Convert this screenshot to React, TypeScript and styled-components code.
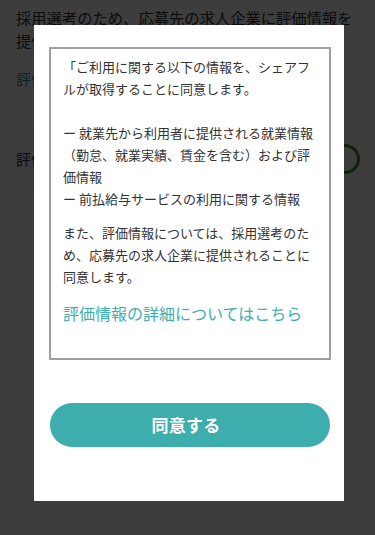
import React from "react";
import styled, { createGlobalStyle } from "styled-components";

const GlobalStyle = createGlobalStyle`
  html, body {
    margin: 0;
    padding: 0;
    background: #ffffff;
    font-family: "Noto Sans CJK JP", "Noto Sans", sans-serif;
    color: #333333;
  }
  * { box-sizing: border-box; }
`;

const Page = styled.div`
  width: 375px;
  height: 535px;
  overflow: hidden;
  background: #ffffff;
`;

const Section = styled.div`
  padding: 6px 16px 0 16px;
`;

const BgText = styled.p`
  margin: 0;
  font-size: 15.3px;
  line-height: 23px;
  color: #333333;
`;

const BgLink = styled.p`
  margin: 15px 0 38px;
  font-size: 15px;
  line-height: 23px;
  color: #2f8f8a;
`;

const SettingRow = styled.div`
  display: flex;
  align-items: center;
  justify-content: space-between;
  height: 60px;
  padding: 0 16px;
  border-top: 1px solid #f0f0f0;
  background: #fbfbfb;
`;

const SettingLabel = styled.span`
  font-size: 15px;
  color: #333333;
`;

const Toggle = styled.span`
  width: 30px;
  height: 30px;
  margin-right: -1px;
  border-radius: 50%;
  border: 3px solid #3a8a3a;
`;

const Overlay = styled.div`
  position: fixed;
  inset: 0;
  background: rgba(0, 0, 0, 0.76);
  padding: 25px 0 0 34px;
`;

const Modal = styled.div`
  width: 310px;
  height: 476px;
  background: #ffffff;
  padding: 22px 13px 0 15px;
  display: flex;
  flex-direction: column;
`;

const TermsBox = styled.div`
  height: 313px;
  border: 2px solid #a0a0a0;
  padding: 7px 12px 0 12px;
  overflow: hidden;
`;

const TermsText = styled.p<{ $gap?: number }>`
  margin: 0 0 ${(p) => p.$gap ?? 0}px;
  font-size: 13px;
  line-height: 22px;
  color: #333333;
  white-space: pre-wrap;
`;

const DetailLink = styled.a`
  display: block;
  margin-top: 13px;
  font-size: 16px;
  line-height: 24px;
  color: #3eaeae;
  text-decoration: none;
`;

const AgreeButton = styled.button`
  margin: 43px 0 0 1px;
  width: 280px;
  height: 44px;
  border: none;
  border-radius: 22px;
  background: #3eadad;
  color: #ffffff;
  font-family: "Noto Sans CJK JP", "Noto Sans", sans-serif;
  font-size: 17px;
  font-weight: 700;
  letter-spacing: 0.2px;
  cursor: pointer;
  padding: 0 8px 2px 0;
`;

export default function App() {
  return (
    <>
      <GlobalStyle />
      <Page>
        <Section>
          <BgText>採用選考のため、応募先の求人企業に評価情報を提供することに同意します。</BgText>
          <BgLink>評価情報の詳細についてはこちら</BgLink>
        </Section>
        <SettingRow>
          <SettingLabel>評価情報の提供</SettingLabel>
          <Toggle />
        </SettingRow>
      </Page>
      <Overlay>
        <Modal>
          <TermsBox>
            <TermsText $gap={12}>
              {"「ご利用に関する以下の情報を、シェアフルが取得することに同意します。\n\nー 就業先から利用者に提供される就業情報（勤怠、就業実績、賃金を含む）および評価情報\nー 前払給与サービスの利用に関する情報"}
            </TermsText>
            <TermsText>
              また、評価情報については、採用選考のため、応募先の求人企業に提供されることに同意します。
            </TermsText>
            <DetailLink>評価情報の詳細についてはこちら</DetailLink>
          </TermsBox>
          <AgreeButton>同意する</AgreeButton>
        </Modal>
      </Overlay>
    </>
  );
}
